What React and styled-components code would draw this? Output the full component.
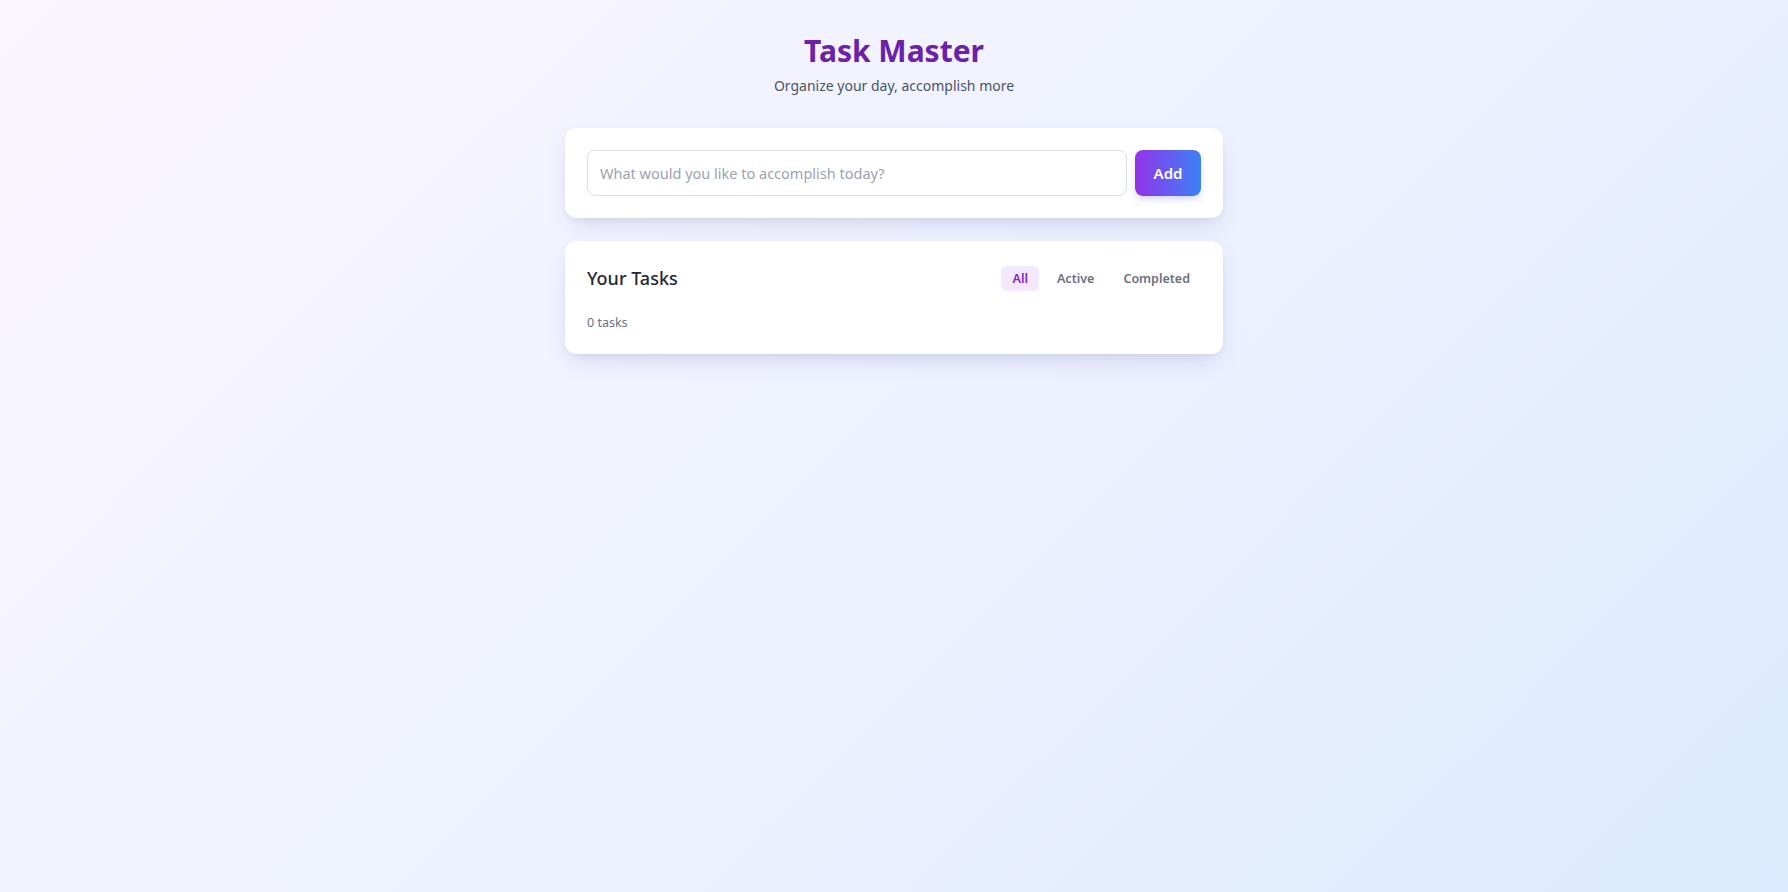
import React, { useState } from 'react';
import styled, { createGlobalStyle } from 'styled-components';

const GlobalStyle = createGlobalStyle`
  html, body {
    margin: 0;
    padding: 0;
  }
  body {
    font-family: "Noto Sans", "Open Sans", sans-serif;
    min-height: 100vh;
    background: linear-gradient(135deg, #faf5ff 0%, #eef2ff 50%, #dbeafe 100%);
    background-attachment: fixed;
  }
`;

const Page = styled.div`
  min-height: 100vh;
  padding-top: 33px;
  box-sizing: border-box;
`;

const Container = styled.div`
  width: 658px;
  margin: 0 auto;
  display: flex;
  flex-direction: column;
`;

const Header = styled.header`
  text-align: center;
  margin-bottom: 32px;
`;

const Title = styled.h1`
  margin: 0;
  font-size: 30px;
  line-height: 36px;
  font-weight: 700;
  color: #6b21a8;
`;

const Subtitle = styled.p`
  margin: 7px 0 0;
  font-size: 14px;
  line-height: 20px;
  color: #4b5563;
`;

const Card = styled.section`
  background: #fff;
  border-radius: 12px;
  padding: 22px;
  box-shadow: 0 10px 24px -6px rgba(99, 102, 160, 0.22), 0 4px 8px -4px rgba(99, 102, 160, 0.12);
  margin-bottom: ${props => props.gap || 0}px;
`;

const InputRow = styled.form`
  display: flex;
  gap: 8px;
`;

const TaskInput = styled.input`
  flex: 1;
  height: 46px;
  box-sizing: border-box;
  border: 1px solid #dcdfe4;
  border-radius: 8px;
  padding: 0 12px;
  font-family: inherit;
  font-size: 14.5px;
  color: #1f2937;
  outline: none;
  &::placeholder {
    color: #9ca3af;
  }
`;

const AddButton = styled.button`
  width: 66px;
  height: 46px;
  border: none;
  border-radius: 8px;
  background: linear-gradient(90deg, #9333ea, #3b82f6);
  color: #fff;
  font-family: inherit;
  font-size: 15px;
  font-weight: 600;
  box-shadow: 0 4px 8px -2px rgba(99, 102, 241, 0.35);
  cursor: pointer;
`;

const TasksHead = styled.div`
  display: flex;
  align-items: center;
  justify-content: space-between;
  margin-top: 1px;
`;

const TasksTitle = styled.h2`
  margin: 0;
  font-size: 18px;
  line-height: 28px;
  font-weight: 500;
  color: #1f2937;
`;

const Filters = styled.div`
  display: flex;
  gap: 7px;
`;

const FilterButton = styled.button`
  border: none;
  border-radius: 6px;
  padding: 0 11px;
  height: 25px;
  font-family: inherit;
  font-size: 12.5px;
  font-weight: 600;
  background: ${props => props.active ? '#f3e8ff' : 'transparent'};
  color: ${props => props.active ? '#7e22ce' : '#6b7280'};
  cursor: pointer;
`;

const Count = styled.p`
  margin: 22px 0 0;
  font-size: 12.5px;
  line-height: 18px;
  color: #6b7280;
`;

const FILTERS = ['All', 'Active', 'Completed'];

const App = () => {
  const [filter, setFilter] = useState('All');
  const [text, setText] = useState('');

  return (
    <Page>
      <GlobalStyle />
      <Container>
        <Header>
          <Title>Task Master</Title>
          <Subtitle>Organize your day, accomplish more</Subtitle>
        </Header>

        <Card gap={23}>
          <InputRow onSubmit={e => e.preventDefault()}>
            <TaskInput
              value={text}
              onChange={e => setText(e.target.value)}
              placeholder="What would you like to accomplish today?"
            />
            <AddButton type="submit">Add</AddButton>
          </InputRow>
        </Card>

        <Card>
          <TasksHead>
            <TasksTitle>Your Tasks</TasksTitle>
            <Filters>
              {FILTERS.map(f =>
                <FilterButton key={f} active={filter === f} onClick={() => setFilter(f)}>
                  {f}
                </FilterButton>
              )}
            </Filters>
          </TasksHead>
          <Count>0 tasks</Count>
        </Card>
      </Container>
    </Page>
  );
};

export default App;
